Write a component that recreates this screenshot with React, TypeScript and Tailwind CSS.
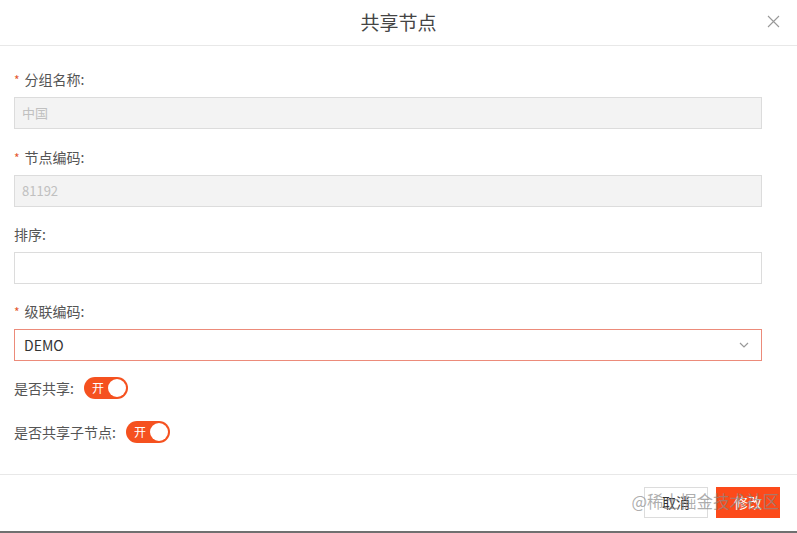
import React, { useState } from 'react';

const font = { fontFamily: '"Noto Sans CJK SC", "Noto Sans", "Liberation Sans", sans-serif' };

function Label({ text, required }: { text: string; required?: boolean }) {
  return (
    <div className="flex items-center h-5 mb-2 text-[14px] leading-5 text-[#555]">
      {required && <span className="text-[#e4572e] mr-[5px] text-[12px] leading-none pt-[2px]">*</span>}
      <span>{text}</span>
    </div>
  );
}

function Toggle({ on, onClick }: { on: boolean; onClick: () => void }) {
  return (
    <button
      type="button"
      onClick={onClick}
      className={`relative w-[44px] h-[22px] rounded-full flex items-center px-[2px] ${
        on ? 'bg-[#f5511f] justify-end' : 'bg-[#c8c8c8] justify-start'
      }`}
    >
      <span className={`absolute text-[12px] text-white leading-none ${on ? 'left-[8px]' : 'right-[7px]'}`}>
        {on ? '开' : '关'}
      </span>
      <span className="w-[18px] h-[18px] rounded-full bg-white" />
    </button>
  );
}

export default function App() {
  const [share, setShare] = useState(true);
  const [shareChild, setShareChild] = useState(true);
  const [sort, setSort] = useState('');

  return (
    <div className="w-[797px] h-[533px] bg-white flex flex-col overflow-hidden" style={font}>
      {/* Header */}
      <div className="relative h-[46px] shrink-0 flex items-center justify-center border-b border-[#e8e8e8]">
        <h2 className="text-[19px] text-[#444] font-normal">共享节点</h2>
        <button type="button" className="absolute right-[17px] top-[15px] text-[#999]">
          <svg width="13" height="13" viewBox="0 0 13 13" fill="none" stroke="currentColor" strokeWidth="1.1">
            <path d="M1 1L12 12M12 1L1 12" />
          </svg>
        </button>
      </div>

      {/* Body */}
      <div className="flex-1 px-[14px] pt-[23px] pr-[35px]">
        <Label text="分组名称:" required />
        <div className="h-[32px] mb-[18px] border border-[#dcdcdc] bg-[#f3f3f3] flex items-center pl-[7px] text-[13px] text-[#c0c0c0]">
          中国
        </div>

        <Label text="节点编码:" required />
        <div className="h-[32px] mb-[17px] border border-[#dcdcdc] bg-[#f3f3f3] flex items-center pl-[7px] text-[13px] text-[#c0c0c0]">
          81192
        </div>

        <Label text="排序:" />
        <input
          value={sort}
          onChange={(e) => setSort(e.target.value)}
          className="w-full h-[32px] mb-[17px] border border-[#dcdcdc] bg-white px-[8px] text-[13px] outline-none block"
        />

        <Label text="级联编码:" required />
        <div className="h-[32px] mb-[16px] border border-[#ec8b7a] bg-white flex items-center justify-between pl-[9px] pr-[12px] text-[14px] text-[#333]">
          <span>DEMO</span>
          <svg width="10" height="6" viewBox="0 0 10 6" fill="none" stroke="#999" strokeWidth="1.2">
            <path d="M1 1L5 5L9 1" />
          </svg>
        </div>

        <div className="flex items-center h-[22px] mb-[22px] text-[14px] text-[#555]">
          <span className="mr-[10px]">是否共享:</span>
          <Toggle on={share} onClick={() => setShare(!share)} />
        </div>

        <div className="flex items-center h-[22px] text-[14px] text-[#555]">
          <span className="mr-[10px]">是否共享子节点:</span>
          <Toggle on={shareChild} onClick={() => setShareChild(!shareChild)} />
        </div>
      </div>

      {/* Footer */}
      <div className="relative h-[57px] shrink-0 border-t border-[#e8e8e8] flex items-start justify-end gap-[8px] pt-[12px] pr-[17px]">
        <button type="button" className="w-[64px] h-[31px] border border-[#dcdcdc] bg-white text-[14px] text-[#333]">
          取消
        </button>
        <button type="button" className="w-[64px] h-[31px] bg-[#fc4a1a] text-[14px] text-white">
          修改
        </button>
        <span className="absolute right-[18px] top-[18px] text-[16.5px] leading-none text-[#8a8a8a]/70 pointer-events-none">
          @稀土掘金技术社区
        </span>
      </div>
      <div className="h-[2px] shrink-0 bg-[#707070]" />
    </div>
  );
}
